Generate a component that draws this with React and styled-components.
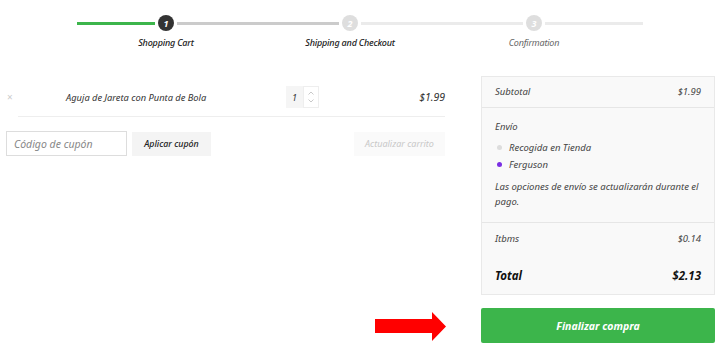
import React from "react";
import styled, { createGlobalStyle } from "styled-components";

const Global = createGlobalStyle`
  html, body { margin: 0; padding: 0; background: #fff; }
  body { font-family: "Noto Sans", "Open Sans", sans-serif; color: #333; }
  * { box-sizing: border-box; }
`;

const Page = styled.div`
  width: 718px;
  height: 349px;
  overflow: hidden;
  padding-top: 15px;
`;

const Track = styled.div`
  display: flex;
  align-items: center;
  margin-left: 77px;
  height: 16px;
  gap: 3px;
`;

const Seg = styled.div`
  width: ${(p) => p.$w}px;
  height: 3px;
  background: ${(p) => p.$c};
`;

const Dot = styled.div`
  width: 16px;
  height: 16px;
  border-radius: 50%;
  background: ${(p) => (p.$active ? "#333" : "#dedede")};
  color: #fff;
  font-size: 9px;
  font-weight: 700;
  font-style: italic;
  display: flex;
  align-items: center;
  justify-content: center;
`;

const Labels = styled.div`
  display: grid;
  grid-template-columns: repeat(3, 184px);
  margin-left: 74px;
  margin-top: 5px;
`;

const Label = styled.div`
  text-align: center;
  font-size: 9px;
  font-style: italic;
  font-weight: ${(p) => (p.$strong ? 500 : 400)};
  color: ${(p) => (p.$strong ? "#222" : "#666")};
  line-height: 14px;
  letter-spacing: -0.2px;
`;

const Main = styled.div`
  display: grid;
  grid-template-columns: 439px 234px;
  column-gap: 36px;
  row-gap: 13px;
  padding-left: 6px;
  margin-top: 27px;
`;

const CartCol = styled.div`
  display: flex;
  flex-direction: column;
`;

const CartRow = styled.div`
  display: grid;
  grid-template-columns: 60px 220px 1fr auto;
  align-items: center;
  height: 39px;
  padding-top: 1px;
`;

const Remove = styled.span`
  font-size: 10px;
  color: #ccc;
  padding-left: 1px;
`;

const Name = styled.span`
  font-size: 9.3px;
  font-style: italic;
  color: #333;
`;

const Qty = styled.div`
  display: flex;
  height: 22px;
`;

const QtyValue = styled.div`
  width: 17px;
  background: #f5f5f5;
  font-size: 9px;
  font-style: italic;
  display: flex;
  align-items: center;
  justify-content: center;
  color: #333;
`;

const Spinner = styled.div`
  width: 16px;
  border: 1px solid #eee;
  display: flex;
  flex-direction: column;
  align-items: center;
  justify-content: space-around;
  padding: 2px 0;
`;

const Price = styled.span`
  font-size: 10.5px;
  font-style: italic;
  color: #333;
`;

const Divider = styled.div`
  height: 1px;
  background: #eee;
  margin-left: 12px;
`;

const CouponRow = styled.div`
  display: flex;
  align-items: center;
  gap: 5px;
  margin-top: 14px;
`;

const CouponInput = styled.input`
  width: 121px;
  height: 25px;
  border: 1px solid #ddd;
  padding: 0 7px;
  font-family: inherit;
  font-size: 10.5px;
  font-style: italic;
  color: #333;
  outline: none;
  &::placeholder { color: #888; }
`;

const Btn = styled.button`
  height: 24px;
  border: 0;
  padding: 0;
  width: ${(p) => p.$w}px;
  background: ${(p) => (p.$muted ? "#fafafa" : "#f4f4f4")};
  color: ${(p) => (p.$muted ? "#c8c8c8" : "#222")};
  font-family: inherit;
  font-size: ${(p) => (p.$muted ? 9 : 8.8)}px;
  font-style: italic;
  font-weight: ${(p) => (p.$muted ? 400 : 500)};
  margin-left: ${(p) => (p.$right ? "auto" : "0")};
`;

const Panel = styled.div`
  background: #f9f9f9;
  border: 1px solid #e9e9e9;
  height: 219px;
  display: flex;
  flex-direction: column;
  margin-top: -1px;
`;

const Row = styled.div`
  display: flex;
  justify-content: space-between;
  align-items: center;
  padding: 0 13px;
  height: ${(p) => p.$h}px;
  border-bottom: ${(p) => (p.$line ? "1px solid #e6e6e6" : "0")};
  font-size: ${(p) => (p.$big ? 11.5 : 9.5)}px;
  font-style: italic;
  font-weight: ${(p) => (p.$big ? 700 : 400)};
  color: ${(p) => (p.$big ? "#111" : "#444")};
  padding-top: ${(p) => (p.$big ? 2 : 0)}px;
`;

const Ship = styled.div`
  padding: 11px 13px 13px;
  border-bottom: 1px solid #e6e6e6;
  font-size: 9.5px;
  font-style: italic;
  color: #444;
  line-height: 15px;
`;

const Options = styled.div`
  display: flex;
  flex-direction: column;
  gap: 2px;
  margin: 6px 0 7px;
`;

const Option = styled.div`
  display: flex;
  align-items: center;
  gap: 7px;
  padding-left: 2px;
`;

const Radio = styled.span`
  width: 5px;
  height: 5px;
  border-radius: 50%;
  background: ${(p) => (p.$on ? "#7b2fe3" : "#ddd")};
`;

const ArrowCell = styled.div`
  display: flex;
  justify-content: flex-end;
  align-items: center;
  margin-right: -2px;
  padding-top: 2px;
`;

const Checkout = styled.button`
  height: 35px;
  border: 0;
  border-radius: 2px;
  background: #3cb54b;
  color: #fff;
  font-family: inherit;
  font-size: 10.5px;
  font-weight: 700;
  font-style: italic;
`;

const Chev = ({ up }) => (
  <svg width="6" height="4" viewBox="0 0 6 4">
    <path
      d={up ? "M0.5 3.5 L3 1 L5.5 3.5" : "M0.5 0.5 L3 3 L5.5 0.5"}
      fill="none"
      stroke="#bbb"
      strokeWidth="0.8"
    />
  </svg>
);

export default function App() {
  return (
    <Page>
      <Global />
      <Track>
        <Seg $w={78} $c="#3cb54b" />
        <Dot $active>1</Dot>
        <Seg $w={162} $c="#cbcbcb" />
        <Dot>2</Dot>
        <Seg $w={162} $c="#ebebeb" />
        <Dot>3</Dot>
        <Seg $w={98} $c="#ebebeb" />
      </Track>
      <Labels>
        <Label $strong>Shopping Cart</Label>
        <Label $strong>Shipping and Checkout</Label>
        <Label>Confirmation</Label>
      </Labels>
      <Main>
        <CartCol>
          <CartRow>
            <Remove>×</Remove>
            <Name>Aguja de Jareta con Punta de Bola</Name>
            <Qty>
              <QtyValue>1</QtyValue>
              <Spinner>
                <Chev up />
                <Chev />
              </Spinner>
            </Qty>
            <Price>$1.99</Price>
          </CartRow>
          <Divider />
          <CouponRow>
            <CouponInput placeholder="Código de cupón" />
            <Btn $w={79}>Aplicar cupón</Btn>
            <Btn $w={91} $muted $right>Actualizar carrito</Btn>
          </CouponRow>
        </CartCol>
        <Panel>
          <Row $h={31} $line>
            <span>Subtotal</span>
            <span>$1.99</span>
          </Row>
          <Ship>
            <div>Envío</div>
            <Options>
              <Option><Radio />Recogida en Tienda</Option>
              <Option><Radio $on />Ferguson</Option>
            </Options>
            <div>Las opciones de envío se actualizarán durante el pago.</div>
          </Ship>
          <Row $h={32}>
            <span>Itbms</span>
            <span>$0.14</span>
          </Row>
          <Row $h={40} $big>
            <span>Total</span>
            <span>$2.13</span>
          </Row>
        </Panel>
        <ArrowCell>
          <svg width="72" height="29" viewBox="0 0 72 29">
            <polygon points="0,7 57,7 57,0 71,14.5 57,29 57,21 0,21" fill="#ff0000" />
          </svg>
        </ArrowCell>
        <Checkout>Finalizar compra</Checkout>
      </Main>
    </Page>
  );
}
